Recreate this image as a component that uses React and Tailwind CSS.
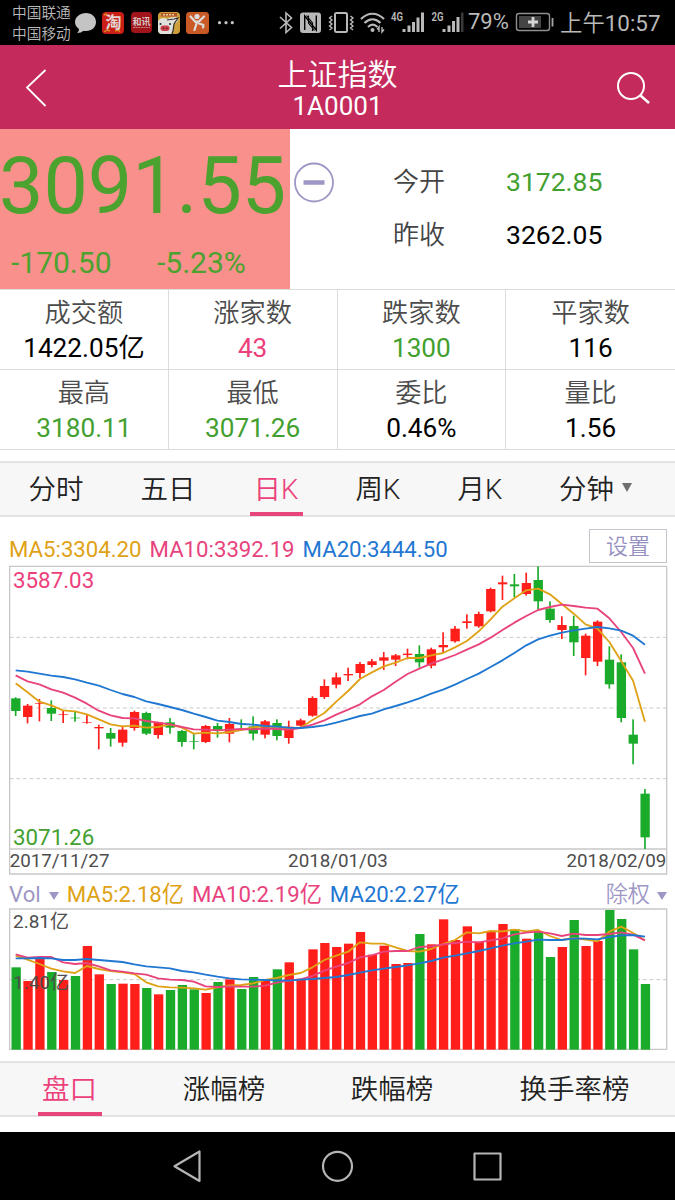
const STATS = [
  { label: '成交额', value: '1422.05亿', color: 'text-black' },
  { label: '涨家数', value: '43', color: 'text-[#ec407a]' },
  { label: '跌家数', value: '1300', color: 'text-[#43a02f]' },
  { label: '平家数', value: '116', color: 'text-black' },
  { label: '最高', value: '3180.11', color: 'text-[#43a02f]' },
  { label: '最低', value: '3071.26', color: 'text-[#43a02f]' },
  { label: '委比', value: '0.46%', color: 'text-black' },
  { label: '量比', value: '1.56', color: 'text-black' },
];

const PERIODS = [
  { label: '分时', width: 'w-[112px]' },
  { label: '五日', width: 'w-[112px]' },
  { label: '日K', width: 'w-[104px]', active: true },
  { label: '周K', width: 'w-[100px]' },
  { label: '月K', width: 'w-[104px]' },
  { label: '分钟', width: 'w-[127px]', menu: true },
];

const RANKS = [
  { label: '盘口', width: 'w-[139px]', active: true },
  { label: '涨幅榜', width: 'w-[170px]' },
  { label: '跌幅榜', width: 'w-[166px]' },
  { label: '换手率榜', width: 'w-[199px]' },
];

const RED = '#ff1e1a';
const GREEN = '#1bab2b';
const MA_COLORS = ['#dfa216', '#e8437d', '#1f77d2'];

// [high, top, bottom, low, up ? 1 : 0], three chart units per pixel
const CANDLES = [
  [412, 415, 453, 468, 0], [432, 437, 471, 490, 1], [417, 429, 431, 484, 1], [421, 444, 461, 483, 0],
  [450, 463, 465, 489, 1], [453, 473, 475, 485, 0], [462, 486, 488, 491, 1], [494, 501, 505, 568, 1],
  [504, 519, 536, 560, 0], [497, 509, 548, 560, 1], [452, 456, 504, 512, 1], [455, 459, 521, 525, 0],
  [485, 487, 525, 536, 1], [474, 487, 503, 521, 0], [510, 513, 546, 560, 0], [521, 543, 545, 568, 0],
  [495, 498, 546, 549, 1], [489, 498, 510, 533, 0], [474, 492, 521, 547, 1], [478, 490, 492, 510, 0],
  [469, 499, 521, 541, 0], [480, 484, 524, 535, 1], [478, 489, 528, 541, 0], [482, 500, 534, 551, 1],
  [476, 481, 497, 500, 1], [409, 414, 467, 470, 1], [358, 378, 411, 417, 1], [338, 352, 374, 385, 1],
  [323, 342, 346, 363, 1], [306, 312, 339, 354, 1], [297, 304, 315, 322, 1], [276, 292, 302, 330, 1],
  [282, 286, 299, 318, 1], [266, 281, 285, 298, 1], [256, 282, 307, 323, 0], [263, 268, 317, 325, 1],
  [217, 255, 262, 276, 1], [198, 206, 244, 248, 1], [163, 184, 189, 206, 1], [155, 162, 199, 203, 1],
  [83, 87, 154, 157, 1], [47, 67, 73, 120, 1], [42, 73, 79, 112, 0], [38, 69, 102, 107, 1],
  [19, 60, 124, 148, 0], [124, 146, 180, 188, 0], [169, 195, 210, 237, 1], [167, 198, 247, 288, 0],
  [221, 227, 294, 346, 1], [181, 185, 305, 318, 1], [259, 299, 373, 386, 0], [283, 307, 474, 487, 0],
  [478, 524, 551, 613, 0], [687, 701, 832, 867, 0],
];

const PRICE_MA = [
  [370, 397, 425, 436, 451, 454, 463, 478, 493, 499, 497, 503, 501, 493, 503, 521, 518, 520, 516, 510, 502, 499, 502, 505, 503, 480, 459, 425, 393, 357, 337, 319, 308, 294, 294, 286, 279, 262, 243, 214, 178, 140, 115, 91, 86, 103, 132, 161, 193, 206, 246, 303, 362, 485],
  [346, 364, 373, 388, 398, 413, 431, 452, 466, 474, 475, 483, 488, 493, 501, 508, 509, 511, 509, 507, 508, 506, 507, 509, 504, 494, 481, 464, 449, 433, 409, 390, 365, 342, 326, 311, 298, 285, 269, 253, 233, 210, 188, 168, 150, 141, 134, 138, 143, 146, 175, 216, 264, 341],
  [331, 335, 341, 347, 351, 358, 368, 377, 390, 402, 411, 424, 432, 441, 450, 461, 471, 482, 486, 492, 494, 498, 500, 503, 504, 501, 496, 488, 478, 468, 461, 448, 438, 427, 415, 401, 389, 374, 357, 341, 321, 301, 279, 256, 238, 227, 218, 211, 206, 201, 205, 212, 227, 254],
];

// Tops of the volume bars, the colours follow the candles
const VOLUMES = [
  292, 333, 266, 306, 330, 318, 228, 313, 342, 341, 342, 354, 373, 360, 345, 358, 369, 336,
  328, 357, 321, 331, 298, 277, 326, 238, 219, 231, 221, 186, 254, 227, 282, 279, 192, 223,
  148, 210, 169, 215, 183, 162, 178, 206, 185, 261, 231, 150, 228, 213, 120, 147, 238, 342,
];

// Volume bar colours: red, green
const VOLUME_COLORS = 'grrgrgrrgrrgrgggrgrggrgrrrrrrrrrrrgrrrrrrrgrggrgrrgggg';

const VOLUME_MA = [
  [257, 269, 282, 296, 304, 309, 288, 297, 303, 307, 312, 337, 349, 352, 353, 355, 359, 352, 346, 345, 340, 330, 324, 315, 309, 292, 270, 257, 245, 217, 221, 221, 232, 243, 245, 237, 222, 210, 187, 190, 183, 184, 179, 184, 180, 198, 210, 204, 209, 214, 185, 170, 189, 211],
  [253, 263, 261, 261, 277, 282, 279, 289, 301, 305, 310, 314, 325, 329, 330, 335, 349, 351, 349, 350, 350, 347, 338, 332, 328, 318, 302, 290, 279, 262, 256, 245, 243, 243, 231, 229, 223, 219, 215, 217, 211, 205, 193, 188, 185, 190, 198, 191, 195, 195, 192, 187, 194, 211],
  [265, 265, 264, 265, 270, 270, 267, 270, 273, 276, 283, 289, 292, 295, 303, 307, 314, 320, 325, 328, 329, 330, 331, 332, 329, 327, 324, 321, 315, 308, 301, 296, 291, 286, 280, 273, 263, 257, 250, 243, 235, 227, 220, 215, 209, 210, 210, 205, 206, 208, 201, 196, 195, 200],
];

const xAt = (i) => 47 + i * 35.62;
const toPoints = (values) => values.map((y, i) => `${xAt(i)},${y}`).join(' ');

function StatusBar() {
  return (
    <div className="flex h-[45px] bg-black text-[#b9b9b9]">
      <div className="w-[63px] pl-3 pt-[3px] text-[14.7px] font-[350] leading-[21px] whitespace-nowrap">
        <div>中国联通</div>
        <div>中国移动</div>
      </div>
      <svg className="ml-[9px] h-[45px] w-[168px] shrink-0" viewBox="72 0 168 45">
        <path d="M86 13c-6 0-11 4-11 9 0 3 1.500 5 4 7 0 2-1 3-2 4 3 0 5-1 6-2h3c6 0 10-4 10-9s-4-9-10-9z" fill="#c4c4c4" />
        <rect x="102" y="12" width="22" height="22" rx="4" fill="#c91d16" />
        <path d="M104 15l2-1 1 2M104 32l3-2 3 1M115 31l3-1 2 2" stroke="#d98a20" strokeWidth="1.500" fill="none" />
        <text x="105.500" y="28" fontSize="16" fontWeight="bold" fill="#e2d5d2">淘</text>
        <rect x="131" y="12" width="21" height="21" rx="4" fill="#a0141a" />
        <text x="132.500" y="25" fontSize="9" fontWeight="bold" fill="#d8c8c8">和讯</text>
        <path d="M133 27.500h17" stroke="#c08080" strokeWidth="1" strokeDasharray="2 .6" />
        <rect x="158" y="12" width="22" height="22" rx="4" fill="#cda03c" />
        <rect x="161" y="13" width="16" height="3.500" fill="#b5552a" />
        <path d="M163 14.700h12" stroke="#e8cf9a" strokeWidth="1.600" strokeDasharray="2 1" />
        <path d="M158 21c2-3 6-4 9-2 4-2 8-3 11-1 1 3-2 5-4 6 0 4-1 7-3 10h-9c-3 0-4-2-4-4z" fill="#e0e0dc" />
        <path d="M167 20l7-1 4-1-4 6-1 7-1 3" stroke="#333" strokeWidth="1.200" fill="none" />
        <circle cx="160.500" cy="24" r="1" fill="#222" />
        <circle cx="170" cy="24" r="1" fill="#222" />
        <rect x="160.500" y="25.500" width="9" height="5.500" rx="2.700" fill="#c8414b" />
        <circle cx="163.500" cy="28.200" r=".8" fill="#54161a" />
        <circle cx="166.800" cy="28.200" r=".8" fill="#54161a" />
        <rect x="186" y="12" width="23" height="22" rx="3.500" fill="#c95a26" />
        <circle cx="197" cy="16.500" r="2.600" fill="#dedede" />
        <path d="M190.500 16.500l5 5.500 4-1 4.500-4.500M197 22l-2.500 8M199 23.500l4.500 1.500-.5 2.500" stroke="#dedede" strokeWidth="2.200" strokeLinecap="round" strokeLinejoin="round" fill="none" />
        <g fill="#c4c4c4">
          <circle cx="219.500" cy="22.700" r="1.600" />
          <circle cx="226" cy="22.700" r="1.600" />
          <circle cx="232.300" cy="22.700" r="1.600" />
        </g>
      </svg>
      <svg className="ml-[30px] h-[45px] w-[198px] shrink-0" viewBox="270 0 198 45" fill="none" stroke="#b9b9b9" strokeWidth="1.600">
        <path d="M280 17l11.500 10.500-5.500 5V13l5.500 5L280 28.500" />
        <rect x="300" y="12.500" width="21" height="20.500" rx="3" fill="#b9b9b9" stroke="none" />
        <path d="M304.700 30V16l11.600 14V15.500" stroke="#000" strokeWidth="1.400" />
        <path d="M306.500 15.500l6 7.500v8M308.500 15.500V23l6 7.500" stroke="#000" strokeWidth="1.100" />
        <rect x="335" y="13" width="12" height="19" rx="1.500" strokeWidth="2" />
        <path d="M332 16l-2.500 2 2.500 2-2.500 2 2.500 2-2.500 2 2.500 2-2.500 2M350.500 16l2.500 2-2.500 2 2.500 2-2.500 2 2.500 2-2.500 2 2.500 2" strokeWidth="1.400" />
        <path d="M361 19c7-7 16-7 23 0M364.500 23c5-5 11-5 16 0M368 27c3-3 6.500-3 9.500 0" strokeWidth="2.200" />
        <circle cx="372.500" cy="30" r="2" fill="#b9b9b9" stroke="none" />
        <path d="M379 32v-5l-1.800 2.500M382 27v5l2-2.500" strokeWidth="1.400" />
        <g fill="#b9b9b9" stroke="none">
          <path d="M402.500 29h3v3h-3zM407.500 25.500h3V32h-3zM412 22h3v10h-3zM416.500 17.500h3V32h-3zM421 12.500h3V32h-3z" />
          <path d="M442.500 29h3v3h-3zM447.500 25.500h3V32h-3zM452 21h3v11h-3zM456.500 17h3v15h-3z" />
          <path d="M461 12.500h2.500V32H461z" fill="#3a3a3a" />
          <text x="391" y="20.500" fontSize="12" fontWeight="600" textLength="12" lengthAdjust="spacingAndGlyphs">4G</text>
          <text x="431.500" y="20.500" fontSize="12" fontWeight="600" textLength="12" lengthAdjust="spacingAndGlyphs">2G</text>
        </g>
      </svg>
      <div className="w-[47px] text-[22px] leading-[44px]">79%</div>
      <svg className="h-[45px] w-[42px] shrink-0" viewBox="514 0 42 45" fill="none">
        <rect x="515.500" y="13.500" width="33" height="17" rx="2.500" stroke="#8e8e8e" strokeWidth="1.400" />
        <rect x="518" y="16" width="22" height="12" fill="#444" />
        <path d="M532 17v10M527 22h10" stroke="#d5d5d5" strokeWidth="2.800" />
        <path d="M551.500 18v8.500" stroke="#a5a5a5" strokeWidth="1.800" />
      </svg>
      <div className="ml-[3px] text-[22.4px] leading-[46px] whitespace-nowrap">
        <span className="font-[350]">上午</span>10:57
      </div>
    </div>
  );
}

function Header() {
  return (
    <div className="flex h-[84px] items-center bg-[#c42b5c] text-white">
      <svg className="ml-6 h-10 w-6" viewBox="0 0 24 40" fill="none" stroke="currentColor" strokeWidth="1.800">
        <path d="M21.500 3L3 20.500L21.500 39" />
      </svg>
      <div className="ml-3 flex flex-1 flex-col items-center pt-[2px]">
        <div className="text-[30px] font-[350] leading-[35px]">上证指数</div>
        <div className="text-[26px] leading-[28px]">1A0001</div>
      </div>
      <svg className="mr-5 h-10 w-10" viewBox="0 0 40 40" fill="none" stroke="currentColor" strokeWidth="2">
        <circle cx="16" cy="19" r="13" />
        <path d="M25.500 28.500L34 36" strokeWidth="2.400" />
      </svg>
    </div>
  );
}

function Quote() {
  return (
    <div className="flex h-[160px]">
      <div className="h-full w-[290px] bg-[#f9908c] text-[#4ca22f]">
        <div className="h-[112px] pt-[11px] -ml-px text-[79px] leading-[92px]">3091.55</div>
        <div className="flex text-[30px] leading-[44px]">
          <span className="w-[147px] pl-[11px]">-170.50</span>
          <span className="pl-[10px]">-5.23%</span>
        </div>
      </div>
      <div className="w-[103px] pl-[4px] pt-[33px]">
        <svg className="h-[41px] w-[41px]" viewBox="0 0 41 41" fill="none" stroke="#9d97c5">
          <circle cx="20" cy="20.500" r="19" strokeWidth="1.800" />
          <path d="M9.500 20.500h21" strokeWidth="4.500" />
        </svg>
      </div>
      <div className="grid flex-1 auto-rows-[53px] grid-cols-[113px_1fr] content-start pt-[26px] text-[26.5px] leading-[53px]">
        <span className="pt-px text-[26px] font-[350] text-[#444]">今开</span>
        <span className="text-[#43a02f]">3172.85</span>
        <span className="pt-px text-[26px] font-[350] text-[#444]">昨收</span>
        <span className="text-black">3262.05</span>
      </div>
    </div>
  );
}

function StatGrid() {
  return (
    <div className="grid h-[161px] grid-cols-4 grid-rows-2 border-b border-[#dcdcdc] text-center text-[26.2px]">
      {STATS.map((s) => (
        <div key={s.label} className="border-t border-r border-[#dcdcdc] pt-[5px] nth-[4n]:border-r-0">
          <div className="font-[350] leading-[37px] text-[#4c4c4c]">{s.label}</div>
          <div className={`leading-[33px] ${s.color}`}>{s.value}</div>
        </div>
      ))}
    </div>
  );
}

function TabBar({ tabs, underline }) {
  return (
    <div className="flex h-[56px] border-y-2 border-[#e4e4e4] bg-[#f7f7f7] text-[27.5px] text-[#222]">
      {tabs.map((t) => (
        <div key={t.label} className={`${t.width} flex flex-col items-center`}>
          <div className={`flex h-[49px] items-center pt-[4px] font-[350] leading-[45px] ${t.active ? 'text-[#ec407a]' : ''}`}>
            <span>{t.label}</span>
            {t.menu && (
              <svg className="ml-2 h-[9px] w-[10px] -mt-1" viewBox="0 0 10 9">
                <path d="M0 0h10L5 9z" fill="#6e6e6e" />
              </svg>
            )}
          </div>
          {t.active && <div className={`${underline} h-[4px] shrink-0 bg-[#e8447e]`} />}
        </div>
      ))}
    </div>
  );
}

function MaLines({ series }) {
  return series.map((values, i) => (
    <polyline key={MA_COLORS[i]} points={toPoints(values)} fill="none" stroke={MA_COLORS[i]} strokeWidth="5.500" strokeLinejoin="round" />
  ));
}

function Dashed({ y }) {
  return <path d={`M29 ${y}H2000`} stroke="#c9c9c9" strokeWidth="3" strokeDasharray="11 9" />;
}

function PriceChart() {
  return (
    <svg className="block h-[312px] w-[675px]" viewBox="0 9 2025 936">
      {[232, 444, 656].map((y) => <Dashed key={y} y={y} />)}
      <path d="M29 19H2000V942H29zM29 867H2000" fill="none" stroke="#c8c8c8" strokeWidth="4" />
      {CANDLES.map(([high, top, bottom, low, up], i) => (
        <g key={i} fill={up ? RED : GREEN}>
          <rect x={xAt(i) - 2.5} y={high} width="5" height={low - high} />
          <rect x={xAt(i) - 13.5} y={top} width="28" height={bottom - top} />
        </g>
      ))}
      <MaLines series={PRICE_MA} />
      <g fontSize="67">
        <text x="39" y="84" fill="#ec407a">3587.03</text>
        <text x="39" y="855" fill="#43a02f">3071.26</text>
      </g>
      <g fontSize="56.3" fill="#4d4d4d">
        <text x="29" y="922">2017/11/27</text>
        <text x="1014" y="922" textAnchor="middle">2018/01/03</text>
        <text x="1999" y="922" textAnchor="end">2018/02/09</text>
      </g>
    </svg>
  );
}

function VolumeChart() {
  return (
    <svg className="block h-[143px] w-[675px]" viewBox="0 114 2025 429">
      <Dashed y={329} />
      <path d="M29 117H2000V538H29z" fill="none" stroke="#c8c8c8" strokeWidth="4" />
      {VOLUMES.map((top, i) => (
        <rect key={i} x={xAt(i) - 12.5} y={top} width="28" height={539 - top} fill={VOLUME_COLORS[i] === 'r' ? RED : GREEN} />
      ))}
      <MaLines series={VOLUME_MA} />
      <g fontSize="57" fill="#4d4d4d">
        <text x="39" y="175">2.81亿</text>
        <text x="39" y="358">1.40亿</text>
      </g>
    </svg>
  );
}

function SmallArrow() {
  return (
    <svg className="mt-1 h-[8px] w-[10px]" viewBox="0 0 10 8">
      <path d="M0 0h10L5 8z" fill="#9d97c5" />
    </svg>
  );
}

function NavBar() {
  return (
    <div className="h-[68px] bg-black">
      <svg className="h-[68px] w-[675px]" viewBox="0 0 675 68" fill="none" stroke="#b5b5b5" strokeWidth="2.200" strokeLinejoin="round">
        <path d="M199.500 19.500V49L174.500 34.300z" />
        <circle cx="337.500" cy="34.300" r="14.500" />
        <rect x="474.500" y="21.500" width="26" height="26" />
      </svg>
    </div>
  );
}

export default function App() {
  return (
    <div className="h-[1200px] w-[675px] overflow-hidden bg-white font-['Roboto','Noto_Sans_CJK_SC',sans-serif]">
      <StatusBar />
      <Header />
      <Quote />
      <StatGrid />
      <div className="h-[11px]" />
      <TabBar tabs={PERIODS} underline="w-[53px]" />
      <div className="flex h-[46px] justify-between pl-[9px] pr-[8px] pt-[12px]">
        <div className="flex gap-[8px] text-[22.2px] leading-[40px]">
          <span className="text-[#dfa216]">MA5:3304.20</span>
          <span className="text-[#e8437d]">MA10:3392.19</span>
          <span className="text-[#1f77d2]">MA20:3444.50</span>
        </div>
        <div className="h-[34px] w-[78px] border border-[#c4c4cc] text-center text-[22px] font-[350] leading-[34px] text-[#9690c0]">设置</div>
      </div>
      <PriceChart />
      <div className="flex h-[33px] items-center justify-between pl-[9px] pr-[8px] pt-[4px] text-[22.2px] leading-[30px]">
        <div className="flex items-center gap-[8px]">
          <span className="text-[#9d97c5]">Vol</span>
          <SmallArrow />
          <span className="text-[#dfa216]">MA5:2.18亿</span>
          <span className="text-[#e8437d]">MA10:2.19亿</span>
          <span className="text-[#1f77d2]">MA20:2.27亿</span>
        </div>
        <div className="flex items-center gap-[7px] text-[#9d97c5]">
          <span className="font-[350]">除权</span>
          <SmallArrow />
        </div>
      </div>
      <VolumeChart />
      <div className="h-[10px]" />
      <TabBar tabs={RANKS} underline="w-[64px]" />
      <div className="h-[15px]" />
      <NavBar />
    </div>
  );
}
